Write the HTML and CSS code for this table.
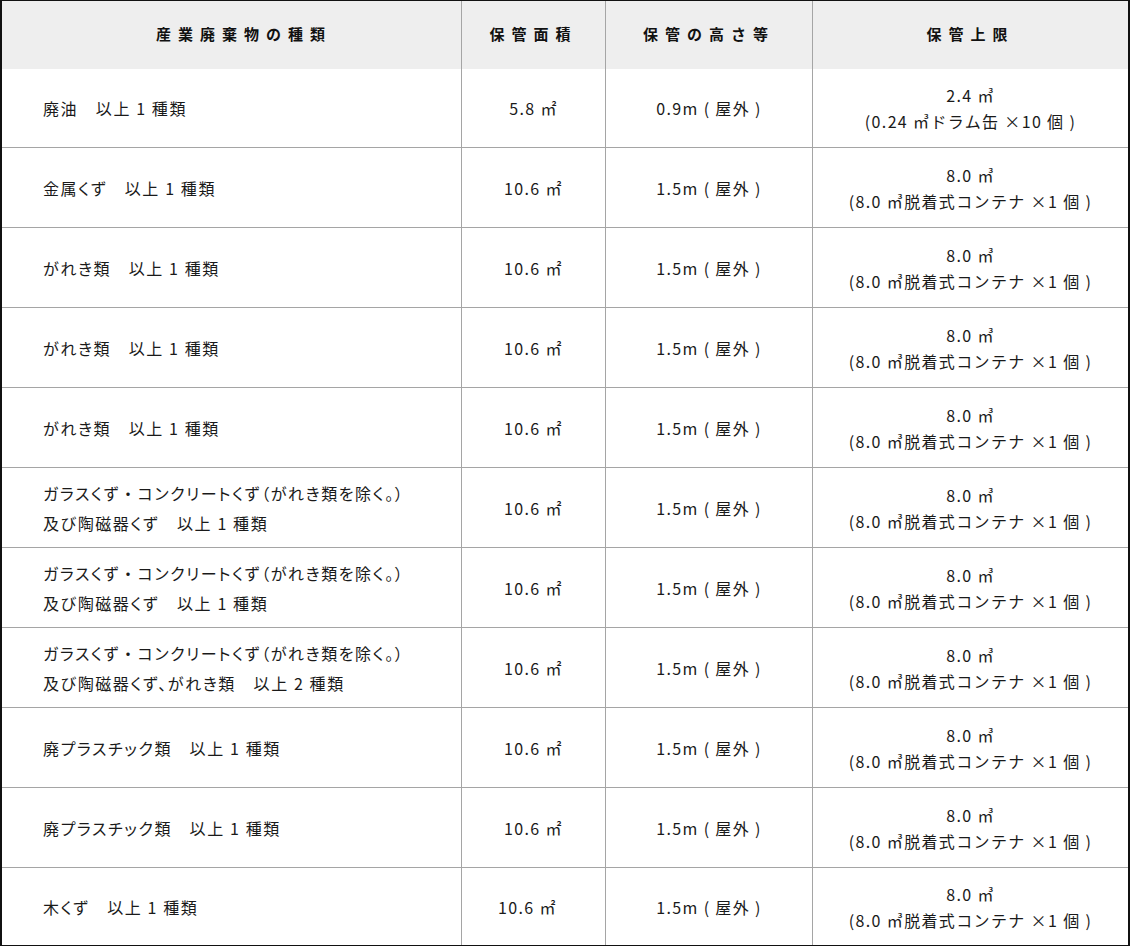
FILE: index.html
```html
<!DOCTYPE html>
<html lang="ja">
<head>
<meta charset="utf-8">
<title>保管上限</title>
<link rel="stylesheet" href="styles.css">
</head>
<body>
<table class="storage">
  <colgroup>
    <col class="c-type">
    <col class="c-area">
    <col class="c-height">
    <col class="c-limit">
  </colgroup>
  <thead>
    <tr>
      <th class="th-type">産業廃棄物の種類</th>
      <th>保管面積</th>
      <th>保管の高さ等</th>
      <th class="last">保管上限</th>
    </tr>
  </thead>
  <tbody>
    <tr class="r-first">
      <td class="type">廃油　以上 1 種類</td>
      <td class="mid">5.8 ㎡</td>
      <td class="mid">0.9m ( 屋外 )</td>
      <td class="limit last">2.4 ㎥<br>(0.24 ㎥ドラム缶 ×10 個 )</td>
    </tr>
    <tr>
      <td class="type">金属くず　以上 1 種類</td>
      <td class="mid">10.6 ㎡</td>
      <td class="mid">1.5m ( 屋外 )</td>
      <td class="limit last">8.0 ㎥<br>(8.0 ㎥脱着式コンテナ ×1 個 )</td>
    </tr>
    <tr>
      <td class="type">がれき類　以上 1 種類</td>
      <td class="mid">10.6 ㎡</td>
      <td class="mid">1.5m ( 屋外 )</td>
      <td class="limit last">8.0 ㎥<br>(8.0 ㎥脱着式コンテナ ×1 個 )</td>
    </tr>
    <tr>
      <td class="type">がれき類　以上 1 種類</td>
      <td class="mid">10.6 ㎡</td>
      <td class="mid">1.5m ( 屋外 )</td>
      <td class="limit last">8.0 ㎥<br>(8.0 ㎥脱着式コンテナ ×1 個 )</td>
    </tr>
    <tr>
      <td class="type">がれき類　以上 1 種類</td>
      <td class="mid">10.6 ㎡</td>
      <td class="mid">1.5m ( 屋外 )</td>
      <td class="limit last">8.0 ㎥<br>(8.0 ㎥脱着式コンテナ ×1 個 )</td>
    </tr>
    <tr>
      <td class="type">ガラスくず<span class="fw">・</span>コンクリートくず（がれき類を除く。）<br>及び陶磁器くず　以上 1 種類</td>
      <td class="mid">10.6 ㎡</td>
      <td class="mid">1.5m ( 屋外 )</td>
      <td class="limit last">8.0 ㎥<br>(8.0 ㎥脱着式コンテナ ×1 個 )</td>
    </tr>
    <tr>
      <td class="type">ガラスくず<span class="fw">・</span>コンクリートくず（がれき類を除く。）<br>及び陶磁器くず　以上 1 種類</td>
      <td class="mid">10.6 ㎡</td>
      <td class="mid">1.5m ( 屋外 )</td>
      <td class="limit last">8.0 ㎥<br>(8.0 ㎥脱着式コンテナ ×1 個 )</td>
    </tr>
    <tr>
      <td class="type">ガラスくず<span class="fw">・</span>コンクリートくず（がれき類を除く。）<br>及び陶磁器くず、がれき類　以上 2 種類</td>
      <td class="mid">10.6 ㎡</td>
      <td class="mid">1.5m ( 屋外 )</td>
      <td class="limit last">8.0 ㎥<br>(8.0 ㎥脱着式コンテナ ×1 個 )</td>
    </tr>
    <tr>
      <td class="type">廃プラスチック類　以上 1 種類</td>
      <td class="mid">10.6 ㎡</td>
      <td class="mid">1.5m ( 屋外 )</td>
      <td class="limit last">8.0 ㎥<br>(8.0 ㎥脱着式コンテナ ×1 個 )</td>
    </tr>
    <tr>
      <td class="type">廃プラスチック類　以上 1 種類</td>
      <td class="mid">10.6 ㎡</td>
      <td class="mid">1.5m ( 屋外 )</td>
      <td class="limit last">8.0 ㎥<br>(8.0 ㎥脱着式コンテナ ×1 個 )</td>
    </tr>
    <tr class="r-last">
      <td class="type">木くず　以上 1 種類</td>
      <td class="mid shifted">10.6 ㎡</td>
      <td class="mid">1.5m ( 屋外 )</td>
      <td class="limit last">8.0 ㎥<br>(8.0 ㎥脱着式コンテナ ×1 個 )</td>
    </tr>
  </tbody>
</table>
</body>
</html>
```

FILE: styles.css
```css
* {
  box-sizing: border-box;
}

html, body {
  margin: 0;
  padding: 0;
  background: #ffffff;
}

body {
  font-family: "Noto Sans CJK JP", "Noto Sans", sans-serif;
  color: #1a1a1a;
}

.storage {
  width: 1130px;
  table-layout: fixed;
  border-collapse: separate;
  border-spacing: 0;
  border-top: 1px solid #111;
  border-bottom: 1px solid #111;
  border-left: 2px solid #111;
  border-right: 2px solid #111;
}

.c-type { width: 460px; }
.c-area { width: 144px; }
.c-height { width: 207px; }
.c-limit { width: 315px; }

.storage th {
  height: 68px;
  padding: 0 0 3px 0;
  background: #eeeeee;
  font-size: 15px;
  font-weight: 700;
  letter-spacing: 7px;
  color: #111;
  text-align: center;
  vertical-align: middle;
  border-right: 1px solid #a5a5a5;
}

.storage th.th-type {
  padding-left: 25px;
}

.storage th.last,
.storage td.last {
  border-right: none;
}

.storage td {
  height: 80px;
  padding: 0;
  font-size: 16px;
  letter-spacing: 0.1em;
  vertical-align: middle;
  border-right: 1px solid #a5a5a5;
  border-bottom: 1px solid #a5a5a5;
}

.storage tr.r-first td {
  height: 79px;
}

.storage tr.r-last td {
  height: 77px;
  border-bottom: none;
}

.storage td.type {
  padding-left: 41px;
  line-height: 30px;
  text-align: left;
  font-feature-settings: "palt";
}

.storage td.type .fw {
  font-feature-settings: normal;
}

.storage td.mid {
  text-align: center;
  line-height: 26px;
  letter-spacing: 0.085em;
}

.storage td.limit {
  text-align: center;
  line-height: 26px;
  letter-spacing: 0.085em;
}

.storage td.shifted {
  padding-right: 12px;
}
```
